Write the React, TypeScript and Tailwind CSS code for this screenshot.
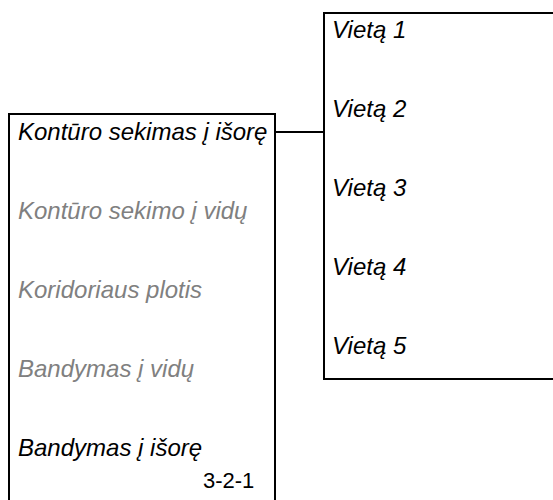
import React from 'react';

const inner = [
    { label: 'Kontūro sekimas į išorę', active: true },
    { label: 'Kontūro sekimo į vidų', active: false },
    { label: 'Koridoriaus plotis', active: false },
    { label: 'Bandymas į vidų', active: false },
    { label: 'Bandymas į išorę', active: true },
];

const places = ['Vietą 1', 'Vietą 2', 'Vietą 3', 'Vietą 4', 'Vietą 5'];

const App: React.FC = () => {
    return (
        <div className="relative w-[553px] h-[500px] overflow-hidden bg-white font-['Liberation_Sans',Arial,sans-serif] text-[24px] leading-[25px] text-black">
            <div className="flex items-start">
                {/* left menu */}
                <div className="ml-[8px] mt-[113px] w-[268px] h-[420px] shrink-0 border-2 border-black pl-[8px] pt-[4px]">
                    <div className="flex flex-col gap-[54px]">
                        {inner.map(item => (
                            <div key={item.label} className={`italic whitespace-nowrap ${item.active ? 'text-black' : 'text-[#808080]'}`}>
                                {item.label}
                            </div>
                        ))}
                    </div>
                    <div className="mt-[8px] pl-[185px] text-[22px]">3-2-1</div>
                </div>

                {/* connector */}
                <div className="mt-[131px] w-[47px] h-[2px] shrink-0 bg-black" />

                {/* sub menu */}
                <div className="mt-[12px] w-[260px] h-[368px] shrink-0 border-2 border-r-0 border-black pl-[7px] pt-[3px]">
                    <div className="flex flex-col gap-[54px]">
                        {places.map(p => (
                            <div key={p} className="italic whitespace-nowrap">{p}</div>
                        ))}
                    </div>
                </div>
            </div>
        </div>
    );
};

export default App;
